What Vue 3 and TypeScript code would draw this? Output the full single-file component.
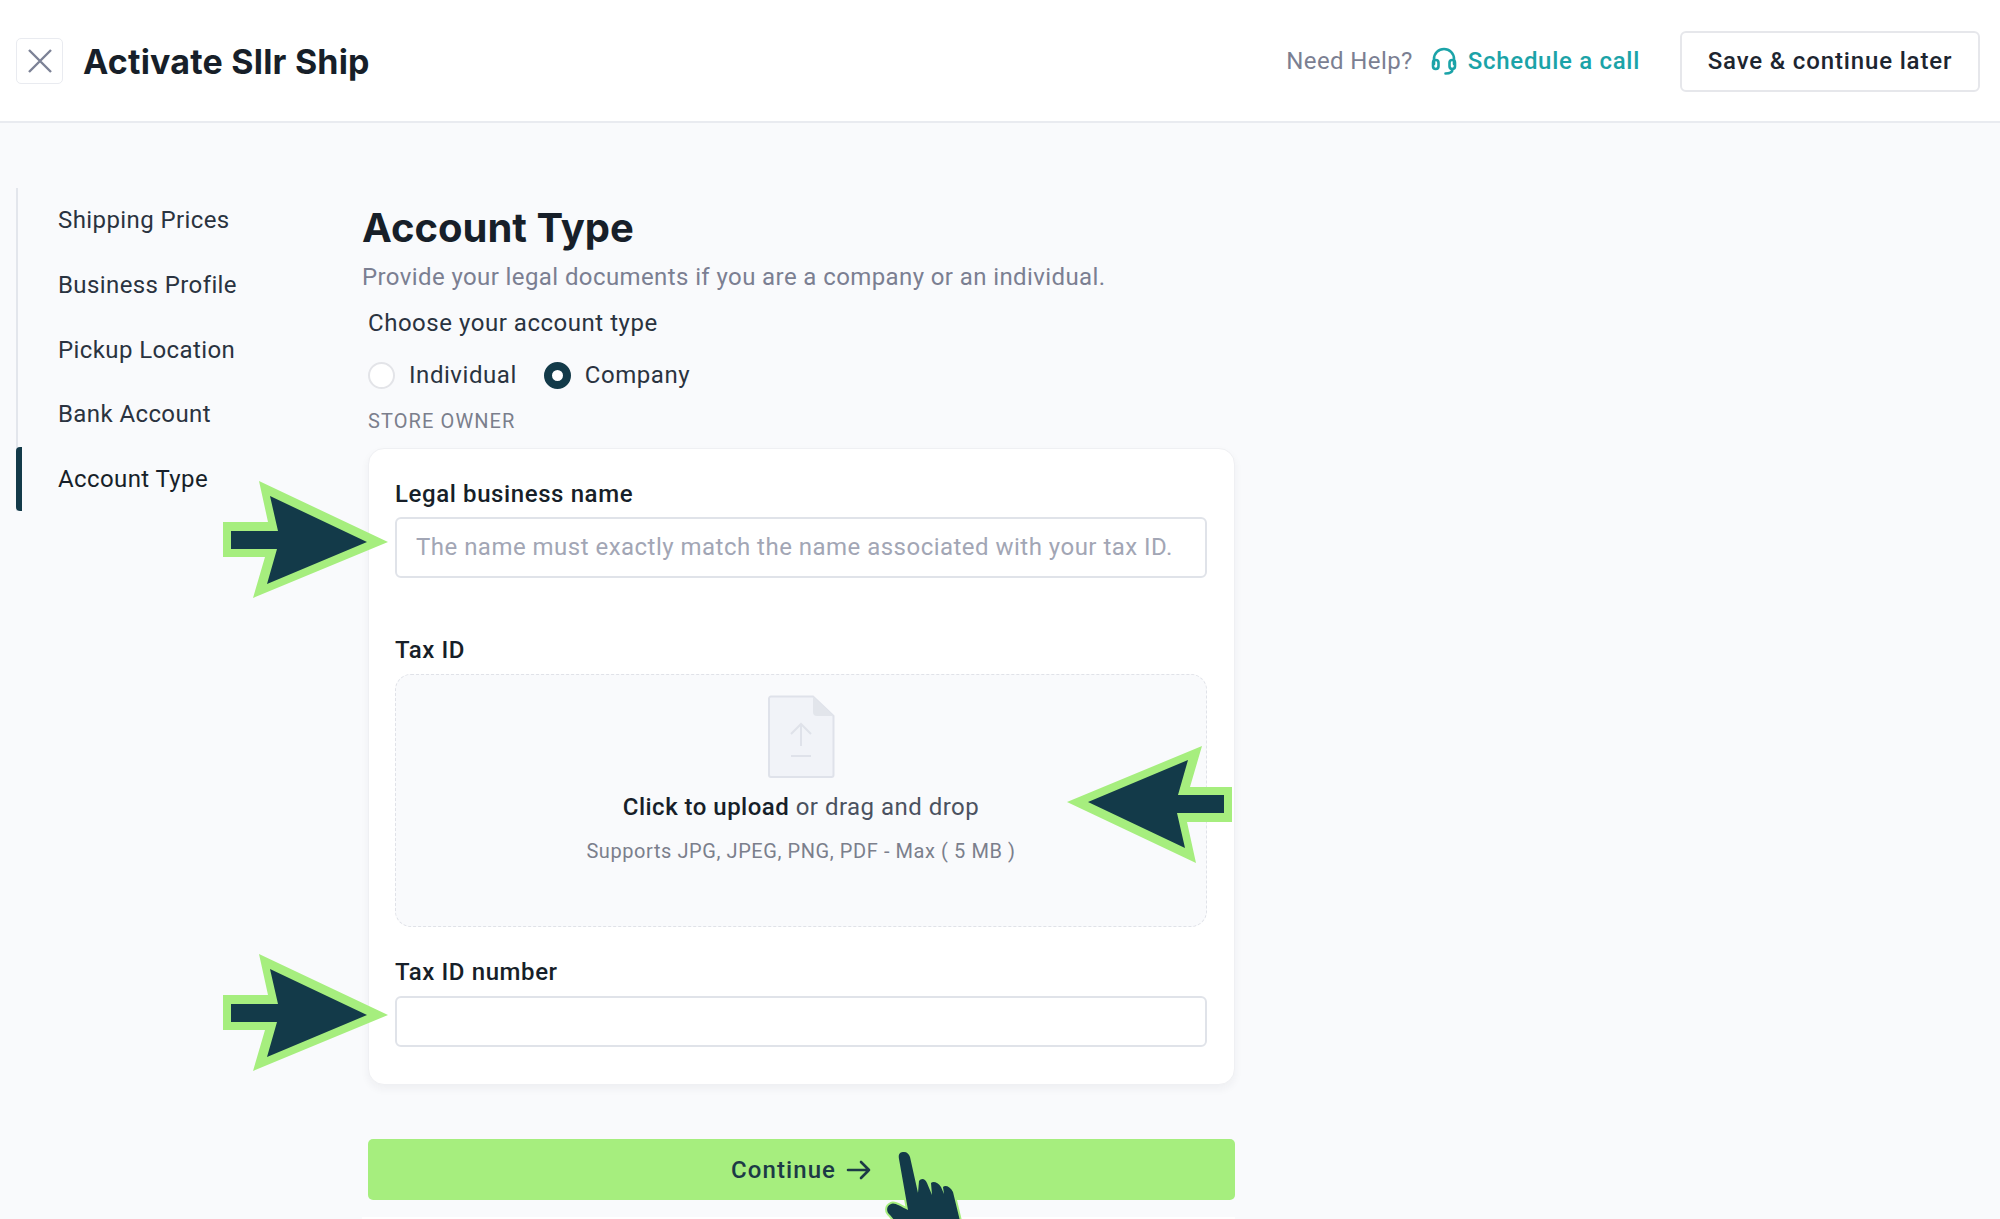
<script setup lang="ts">
const steps = ['Shipping Prices', 'Business Profile', 'Pickup Location', 'Bank Account', 'Account Type']
const activeStep = 'Account Type'
</script>

<template>
  <div class="page">
    <header class="topbar">
      <button class="close" aria-label="Close">
        <svg width="26" height="26" viewBox="0 0 26 26" fill="none" stroke="#7c8296" stroke-width="2.4">
          <path d="M2 2L24 24M24 2L2 24" />
        </svg>
      </button>
      <h1 class="title">Activate Sllr Ship</h1>
      <span class="help">Need Help?</span>
      <a class="call">
        <svg width="26" height="30" viewBox="0 0 26 30" fill="none" stroke="#1ba3a8" stroke-width="2.6" stroke-linecap="round">
          <path d="M3 18V13a10 10 0 0 1 20 0v5" />
          <rect x="2" y="14" width="5.5" height="9" rx="2.7" />
          <rect x="18.5" y="14" width="5.5" height="9" rx="2.7" />
          <path d="M21.5 23c0 3-2.5 4.5-7 4.5" />
        </svg>
        Schedule a call
      </a>
      <button class="later">Save &amp; continue later</button>
    </header>

    <main class="body">
      <nav class="steps">
        <div v-for="step in steps" :key="step" class="step" :class="{ active: step === activeStep }">{{ step }}</div>
      </nav>

      <section class="content">
        <h2 class="heading">Account Type</h2>
        <p class="intro">Provide your legal documents if you are a company or an individual.</p>

        <div class="form">
          <div class="choose">Choose your account type</div>
          <div class="radios">
            <span class="radio"></span>
            <span class="radio-label">Individual</span>
            <span class="radio on"></span>
            <span class="radio-label">Company</span>
          </div>
          <div class="owner">STORE OWNER</div>

          <div class="card">
            <label class="label">Legal business name</label>
            <input class="input tall" placeholder="The name must exactly match the name associated with your tax ID." />

            <label class="label tax">Tax ID</label>
            <div class="drop">
              <svg width="67" height="84" viewBox="0 0 67 84">
                <path d="M3 1.500H45L65.500 21V80a2 2 0 0 1-2 2H3a2 2 0 0 1-2-2V3.500a2 2 0 0 1 2-2z" fill="#f1f3f8" stroke="#dfe2ea" stroke-width="2" />
                <path d="M45 1.500L65.500 21H49a4 4 0 0 1-4-4z" fill="#e2e5eb" />
                <path d="M33 51V29M23 39L33 29L43 39M23 61H43" fill="none" stroke="#dfe2ea" stroke-width="2" />
              </svg>
              <div class="drop-title"><b>Click to upload</b> or drag and drop</div>
              <div class="drop-hint">Supports JPG, JPEG, PNG, PDF - Max ( 5 MB )</div>
            </div>

            <label class="label number">Tax ID number</label>
            <input class="input" />
          </div>

          <button class="continue">
            Continue
            <svg width="26" height="22" viewBox="0 0 26 22" fill="none" stroke="#1c3a46" stroke-width="2.6" stroke-linecap="round" stroke-linejoin="round">
              <path d="M2 11H23M15 3L23 11L15 19" />
            </svg>
          </button>
          <div class="next-card"></div>
        </div>
      </section>
    </main>

    <svg class="arrow a1" width="170" height="120" viewBox="0 0 170 120">
      <polygon points="39,1 168,62 33,118 45,77 3,77 3,42 48,42" fill="#a6ee7e" />
      <polygon points="50,16 147,62 47,104 57,69 11,69 11,51 58,51" fill="#133a49" />
    </svg>
    <svg class="arrow a2" width="170" height="120" viewBox="0 0 170 120">
      <polygon points="39,1 168,62 33,118 45,77 3,77 3,42 48,42" fill="#a6ee7e" />
      <polygon points="50,16 147,62 47,104 57,69 11,69 11,51 58,51" fill="#133a49" />
    </svg>
    <svg class="arrow a3" width="170" height="120" viewBox="0 0 170 120">
      <polygon points="39,1 168,62 33,118 45,77 3,77 3,42 48,42" fill="#a6ee7e" />
      <polygon points="50,16 147,62 47,104 57,69 11,69 11,51 58,51" fill="#133a49" />
    </svg>

    <svg class="arrow hand" width="90" height="74" viewBox="0 0 90 74">
      <path
        d="M28 65L19 14C18 9 20 7 24 7C27 7 29 9 30 12L38 48L39 36C41 33 45 33 47 38L52 50L51 38C53 36 58 37 61 42L64 49L63 42C65 40 70 41 73 47L80 76H15L10 70C6 67 6 61 11 59C14 57 20 61 28 65Z"
        fill="#133a49"
        stroke="#a6ee7e"
        stroke-width="4"
        stroke-linejoin="round"
        paint-order="stroke"
      />
    </svg>
  </div>
</template>

<style>
html,
body {
  margin: 0;
  background: #f9fafc;
}
</style>

<style scoped>
.page {
  position: relative;
  height: 1219px;
  overflow: hidden;
  background: #f9fafc;
  font-family: Roboto, "Liberation Sans", sans-serif;
  font-size: 24px;
  letter-spacing: 0.4px;
  color: #1d2530;
}

.topbar {
  display: flex;
  align-items: center;
  height: 120px;
  padding: 1px 20px 0 16px;
  background: #fff;
  border-bottom: 2px solid #e9ebf0;
}

.close {
  display: flex;
  align-items: center;
  justify-content: center;
  width: 47px;
  height: 46px;
  padding: 0;
  background: #fff;
  border: 1px solid #e9ebf0;
  border-radius: 5px;
}

.title {
  flex: 1;
  margin: 0 0 0 20px;
  font-family: Inter, sans-serif;
  font-size: 34px;
  font-weight: 700;
  letter-spacing: 0.2px;
  color: #171f29;
}

.help {
  color: #7b7f92;
}

.call {
  display: flex;
  align-items: center;
  gap: 11px;
  margin-left: 18px;
  font-weight: 500;
  letter-spacing: 0.7px;
  color: #1ba3a8;
}

.later {
  width: 300px;
  height: 61px;
  margin-left: 40px;
  font-family: inherit;
  font-size: 24px;
  font-weight: 500;
  letter-spacing: 0.85px;
  color: #1d2530;
  background: #fff;
  border: 2px solid #e6e7eb;
  border-radius: 6px;
}

.body {
  display: flex;
  align-items: flex-start;
  padding: 65px 0 0 16px;
}

.steps {
  width: 344px;
  border-left: 2px solid #e3e6ec;
}

.step {
  display: flex;
  align-items: center;
  height: 64.650px;
  padding-left: 40px;
  color: #2a3340;
}

.step.active {
  margin-left: -2px;
  padding-left: 36px;
  color: #171f29;
  border-left: 6px solid #133a49;
  border-radius: 4px;
}

.content {
  width: 873px;
  margin-top: 16px;
}

.heading {
  margin: 0;
  font-family: Inter, sans-serif;
  font-size: 40px;
  font-weight: 700;
  line-height: 48px;
  letter-spacing: 0;
  color: #171f29;
}

.intro {
  margin: 9px 0 0;
  line-height: 32px;
  color: #7b7f92;
}

.form {
  margin-left: 6px;
}

.choose {
  margin-top: 14px;
  line-height: 32px;
  letter-spacing: 0.53px;
  color: #2a3340;
}

.radios {
  display: flex;
  align-items: center;
  height: 32px;
  margin-top: 20px;
  letter-spacing: 0.55px;
}

.radio {
  box-sizing: border-box;
  width: 27px;
  height: 27px;
  background: #fff;
  border: 2px solid #e3e4e8;
  border-radius: 50%;
}

.radio.on {
  background: #fff;
  border: 8px solid #133a49;
}

.radio-label {
  margin: 0 27px 0 14px;
  color: #2a3340;
}

.radio-label:last-child {
  margin-right: 0;
}

.owner {
  margin-top: 18px;
  font-size: 20px;
  line-height: 24px;
  letter-spacing: 1.1px;
  color: #7b7f8c;
}

.card {
  box-sizing: border-box;
  display: flex;
  flex-direction: column;
  height: 637px;
  margin-top: 15px;
  padding: 31px 27px 0 26px;
  background: #fff;
  border: 1px solid #eff0f3;
  border-radius: 16px;
  box-shadow: 0 4px 8px rgba(30, 40, 60, 0.05);
}

.label {
  font-size: 24px;
  font-weight: 500;
  line-height: 28px;
  letter-spacing: 0.6px;
  color: #171f29;
}

.label.tax {
  margin-top: 58px;
}

.label.number {
  margin-top: 31px;
}

.input {
  box-sizing: border-box;
  width: 100%;
  height: 51px;
  margin-top: 10px;
  padding: 0 19px;
  font-family: inherit;
  font-size: 24px;
  letter-spacing: 0.48px;
  background: #fff;
  border: 2px solid #e0e3e9;
  border-radius: 6px;
}

.input.tall {
  height: 61px;
  margin-top: 9px;
  padding-bottom: 2px;
}

.input::placeholder {
  color: #a2a6b5;
  opacity: 1;
}

.drop {
  box-sizing: border-box;
  display: flex;
  flex-direction: column;
  align-items: center;
  height: 253px;
  margin-top: 10px;
  padding-top: 20px;
  background: #f9fafc;
  border: 1px dashed #e0e2e8;
  border-radius: 16px;
}

.drop-title {
  margin-top: 12px;
  line-height: 32px;
  letter-spacing: 0.48px;
  color: #4b5260;
}

.drop-title b {
  font-weight: 500;
  color: #171f29;
}

.drop-hint {
  margin-top: 14px;
  font-size: 20px;
  line-height: 28px;
  letter-spacing: 0.58px;
  color: #7b7f8c;
}

.continue {
  display: flex;
  align-items: center;
  justify-content: center;
  gap: 10px;
  width: 100%;
  height: 61px;
  margin-top: 54px;
  font-family: inherit;
  font-size: 24px;
  font-weight: 500;
  letter-spacing: 1.1px;
  color: #1c3a46;
  background: #a6ee7e;
  border: 0;
  border-radius: 5px;
}

.next-card {
  height: 40px;
  margin: 17px 0 0 -6px;
  background: #fff;
}

.arrow {
  position: absolute;
}

.a1 {
  left: 220px;
  top: 480px;
}

.a2 {
  left: 1065px;
  top: 744px;
  transform: rotate(180deg);
}

.a3 {
  left: 220px;
  top: 953px;
}

.hand {
  left: 880px;
  top: 1145px;
}
</style>
